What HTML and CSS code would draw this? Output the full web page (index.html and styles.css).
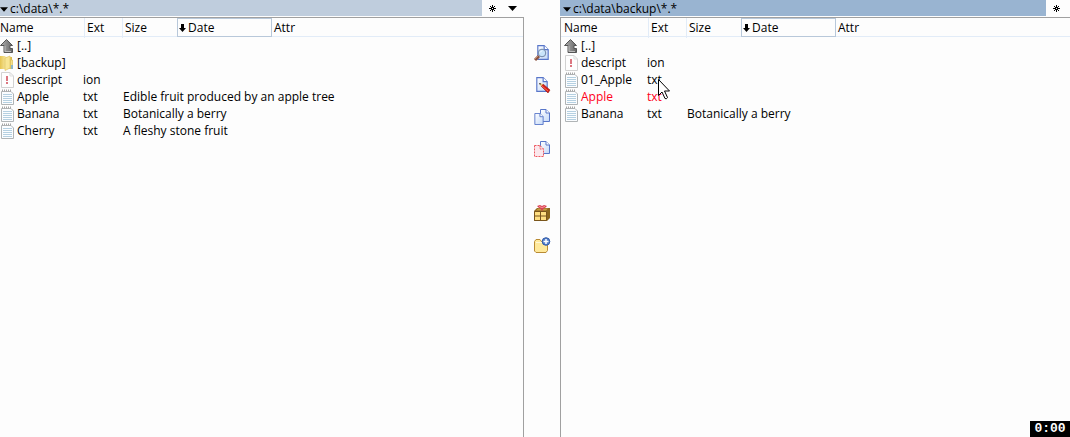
FILE: index.html
```html
<!DOCTYPE html>
<html lang="en">
<head>
<meta charset="utf-8">
<title>File manager</title>
<link rel="stylesheet" href="styles.css">
</head>
<body>
<svg class="sprites" aria-hidden="true">
  <defs>
    <linearGradient id="metal" x1="0" y1="0" x2="1" y2="0"><stop offset="0" stop-color="#b0b0b0"/><stop offset="1" stop-color="#666"/></linearGradient>
    <linearGradient id="paper" x1="0" y1="0" x2="1" y2="1"><stop offset="0" stop-color="#fff"/><stop offset="1" stop-color="#c3d8f8"/></linearGradient>
    <linearGradient id="gold" x1="0" y1="0" x2="1" y2="0"><stop offset="0" stop-color="#e5c452"/><stop offset=".5" stop-color="#f8e9a0"/><stop offset="1" stop-color="#ddb940"/></linearGradient>
    <symbol id="up" viewBox="0 0 14 16"><path d="M6.500 1.500L12.500 7.500H10V10.500H12.500V14.500H4V7.500H.5Z" fill="url(#metal)" stroke="#555"/><path d="M5 8V13.500H11" fill="none" stroke="#bbb"/></symbol>
    <symbol id="folder" viewBox="0 0 14 16"><path d="M0 1H5L6 2H12V14H0Z" fill="url(#gold)"/><path d="M5 3L10 1V13L5 15.500Z" fill="#f8e694" stroke="#e0c468" stroke-width=".7"/><path d="M10.500 5H12.500V13H10.500Z" fill="#f5e18a" stroke="#dcbf5c" stroke-width=".7"/><path d="M11 10H13V14H11Z" fill="#8eb8c8"/></symbol>
    <symbol id="hidden" viewBox="0 0 14 16"><path d="M1.500 .5H10L13.500 4V15.500H1.500Z" fill="#fefefe" stroke="#d2d2d2"/><path d="M10 .5V4H13.500" fill="none" stroke="#ddd"/><path d="M6 4H8V9H6ZM6 10H8V12H6Z" fill="#dc7680"/></symbol>
    <symbol id="text" viewBox="0 0 14 16"><path d="M1.500 2.500H11L13.500 5V15.500H1.500Z" fill="#fbfdff" stroke="#b0b4b6"/><path d="M3 5.500H12M3 7.500H12M3 9.500H12M3 11.500H12M3 13.500H12" stroke="#b5d0e1"/><path d="M2 1.500H11" stroke="#a8a8a8" stroke-width="2" stroke-dasharray="1 1"/></symbol>
    <symbol id="star" viewBox="0 0 9 9"><path d="M4 1H5V3H4ZM4 6H5V8H4ZM1 4H3V5H1ZM6 4H8V5H6ZM3 3H6V6H3ZM2 2H3V3H2ZM6 2H7V3H6ZM2 6H3V7H2ZM6 6H7V7H6Z"/><path d="M4 4H5V5H4Z" fill="#fff"/></symbol>
    <symbol id="sheet" viewBox="0 0 10 13"><path d="M.5 .5H6L9.500 4V12.500H.5Z" fill="url(#paper)" stroke="#5876c9"/><path d="M6 .5V4H9.500" fill="#fff" stroke="#5876c9"/></symbol>
  </defs>
</svg>
<main class="commander">
  <section class="panel panel-left">
    <div class="location">
      <button class="path" type="button"><svg class="caret" viewBox="0 0 9 5"><path d="M0 0H9L4.500 5Z"/></svg>c:\data\*.*</button>
      <button class="mini" type="button" aria-label="Favorites"><svg class="star"><use href="#star"/></svg></button>
      <button class="mini" type="button" aria-label="History"><svg class="caret" viewBox="0 0 9 5"><path d="M0 0H9L4.500 5Z"/></svg></button>
    </div>
    <table class="files">
      <thead><tr><th>Name</th><th>Ext</th><th>Size</th><th class="sorted"><svg class="arrow" viewBox="0 0 7 8"><path d="M2 0H5V4H7L3.500 8L0 4H2Z"/></svg>Date</th><th>Attr</th></tr></thead>
      <tbody>
        <tr><td><svg class="icon"><use href="#up"/></svg>[..]</td><td></td><td></td></tr>
        <tr><td><svg class="icon"><use href="#folder"/></svg>[backup]</td><td></td><td></td></tr>
        <tr><td><svg class="icon"><use href="#hidden"/></svg>descript</td><td>ion</td><td></td></tr>
        <tr><td><svg class="icon"><use href="#text"/></svg>Apple</td><td>txt</td><td colspan="3">Edible fruit produced by an apple tree</td></tr>
        <tr><td><svg class="icon"><use href="#text"/></svg>Banana</td><td>txt</td><td colspan="3">Botanically a berry</td></tr>
        <tr><td><svg class="icon"><use href="#text"/></svg>Cherry</td><td>txt</td><td colspan="3">A fleshy stone fruit</td></tr>
      </tbody>
    </table>
  </section>
  <nav class="tools" aria-label="Tools">
    <button class="tool" type="button" aria-label="View"><svg viewBox="0 0 18 18"><use href="#sheet" x="4" y="1" width="12" height="15"/><path d="M6 12L2 16" stroke="#8b523f" stroke-width="3"/><path d="M5 12L2 15" stroke="#c18a70"/><circle cx="9" cy="9" r="3.800" fill="#c9e4fa" stroke="#7187a8"/><path d="M7 8.500L9 6.500" stroke="#fff"/></svg></button>
    <button class="tool" type="button" aria-label="Edit"><svg viewBox="0 0 18 18"><use href="#sheet" x="3" y="1" width="12" height="15"/><path d="M8 10L10 8L17 14L15 17Z" fill="#d51d16" stroke="#901d18" stroke-width=".6"/><path d="M9 10L15 15" stroke="#ff6654"/><path d="M6 7L10 8L8 10.500Z" fill="#efc26e"/><path d="M6 7L8 7.500L7 9Z" fill="#222"/></svg></button>
    <button class="tool" type="button" aria-label="Copy"><svg viewBox="0 0 18 18"><use href="#sheet" x="7" y="1" width="10" height="13"/><use href="#sheet" x="1" y="5" width="10" height="12"/></svg></button>
    <button class="tool" type="button" aria-label="Move"><svg viewBox="0 0 18 18"><use href="#sheet" x="7" y="1" width="10" height="13"/><path d="M1.500 5.500H7L10.500 9V16.500H1.500Z" fill="#fbe7ec" stroke="#ed5860" stroke-dasharray="2 1"/><path d="M7 5.500V9H10.500" fill="none" stroke="#ed5860" stroke-dasharray="2 1"/></svg></button>
    <button class="tool after-gap" type="button" aria-label="Pack"><svg viewBox="0 0 18 18"><path d="M1 7L4 4H17V14L14 17H1Z" fill="#8c681e"/><path d="M1.500 7.500H13.500V16.500H1.500Z" fill="#ffdf82" stroke="#79551c"/><path d="M2 12H13M7.500 8V16" stroke="#79551c"/><path d="M3 6.500L5 4.500H15L13 6.500Z" fill="#c69b42"/><path d="M4 2L7 1L9 2L11 1L14 2L12 4H11L9 7L7 4H6Z" fill="#d64054"/><path d="M6 2.500L9 3.500L12 2.500" stroke="#ff9798" fill="none"/></svg></button>
    <button class="tool" type="button" aria-label="New folder"><svg viewBox="0 0 18 18"><path d="M1.500 5.500L3 3.500H7L8.500 5.500H14.500V14.500L13 16.500H3L1.500 15Z" fill="#ffe99b" stroke="#b98b34"/><path d="M3 6.500H13" stroke="#fff8d6"/><circle cx="13" cy="5.500" r="3.800" fill="#5581cc" stroke="#345ca8"/><path d="M10.500 5.500H15.500M13 3V8" stroke="#fff" stroke-width="1.500"/></svg></button>
  </nav>
  <section class="panel panel-right">
    <div class="location">
      <button class="path" type="button"><svg class="caret" viewBox="0 0 9 5"><path d="M0 0H9L4.500 5Z"/></svg>c:\data\backup\*.*</button>
      <button class="mini" type="button" aria-label="Favorites"><svg class="star"><use href="#star"/></svg></button>
    </div>
    <table class="files">
      <thead><tr><th>Name</th><th>Ext</th><th>Size</th><th class="sorted"><svg class="arrow" viewBox="0 0 7 8"><path d="M2 0H5V4H7L3.500 8L0 4H2Z"/></svg>Date</th><th>Attr</th></tr></thead>
      <tbody>
        <tr><td><svg class="icon"><use href="#up"/></svg>[..]</td><td></td><td></td></tr>
        <tr><td><svg class="icon"><use href="#hidden"/></svg>descript</td><td>ion</td><td></td></tr>
        <tr><td><svg class="icon"><use href="#text"/></svg>01_Apple</td><td>txt</td><td></td></tr>
        <tr class="selected"><td><svg class="icon"><use href="#text"/></svg>Apple</td><td>txt</td><td></td></tr>
        <tr><td><svg class="icon"><use href="#text"/></svg>Banana</td><td>txt</td><td colspan="3">Botanically a berry</td></tr>
      </tbody>
    </table>
  </section>
</main>
<svg class="cursor" viewBox="0 0 12 21" aria-hidden="true"><path d="M.5 .5V16.500L4 13L7 19.500Q8.500 20.500 9.500 18.500L6.500 12H11.500Z" fill="#fff" stroke="#000"/></svg>
<div class="timer">0:00</div>
</body>
</html>
```
FILE: styles.css
```css
* { box-sizing: border-box; }
body {
  margin: 0;
  background: #fdfdfd;
  color: #000;
  font: 12px/17px "Open Sans", "Noto Sans", sans-serif;
}
button {
  border: 0;
  padding: 0;
  background: none;
  color: inherit;
  font: inherit;
}
svg { display: block; flex: none; }
.sprites { position: absolute; width: 0; height: 0; }
.commander { display: flex; min-height: 100vh; overflow: hidden; }
.panel { display: flex; flex-direction: column; min-width: 0; }
.panel-left { flex: 524 1 0; }
.panel-right { flex: 510 1 0; }
.location { display: flex; height: 17px; }
.panel-left .location { padding-right: 2px; }
.path {
  display: flex;
  flex: 1;
  align-items: center;
  gap: 2px;
  height: 16px;
  min-width: 0;
  background: #bfcddd;
  text-align: left;
  white-space: nowrap;
}
.panel-right .path { padding-left: 3px; background: #99b4d1; }
.mini { display: grid; place-items: center; width: 20px; height: 16px; }
.panel-right .mini { width: 24px; padding-right: 4px; }
.caret { width: 9px; height: 5px; }
.path .caret { width: 8px; margin-top: 3px; }
.star { width: 9px; height: 9px; shape-rendering: crispEdges; }
.files {
  display: block;
  flex: 1;
  border-top: 1px solid #a0a0a0;
  border-right: 1px solid #a0a0a0;
}
.panel-right .files { border-right: 0; border-left: 1px solid #a0a0a0; }
thead, tbody { display: block; }
.files tr { display: grid; }
thead tr {
  grid-template-columns: 85px 38px 54px 95px 1fr;
  height: 19px;
  border-bottom: 1px solid #e2ecf8;
}
tbody tr { grid-template-columns: 83px 40px 1fr; height: 17px; }
.panel-right tr { padding-left: 3px; }
th, td { padding: 0; text-align: left; font-weight: 400; white-space: nowrap; }
th { padding-left: 2px; border-right: 1px solid #e2ecf8; line-height: 20px; }
th:first-child { padding-left: 0; }
th:nth-child(3), th:last-child { border-right: 0; }
.sorted {
  display: flex;
  align-items: center;
  gap: 2px;
  height: 19px;
  padding-left: 1px;
  border: 1px solid #b8c8da;
}
.arrow { width: 7px; height: 8px; }
td:first-child { display: flex; align-items: center; gap: 3px; }
.icon { width: 14px; height: 16px; }
.selected { color: #ff0020; }
.tools { display: flex; flex: none; flex-direction: column; align-items: center; width: 36px; padding-top: 37px; }
.tool { display: grid; place-items: center; width: 32px; height: 32px; }
.tool svg { width: 18px; height: 18px; }
.after-gap { margin-top: 32px; }
.cursor { position: absolute; left: 658px; top: 79px; width: 12px; height: 21px; }
.timer {
  position: fixed;
  right: 0;
  bottom: 0;
  width: 40px;
  height: 16px;
  background: #000;
  color: #fff;
  font: bold 13px/16px "Liberation Mono", monospace;
  text-align: center;
}
```
